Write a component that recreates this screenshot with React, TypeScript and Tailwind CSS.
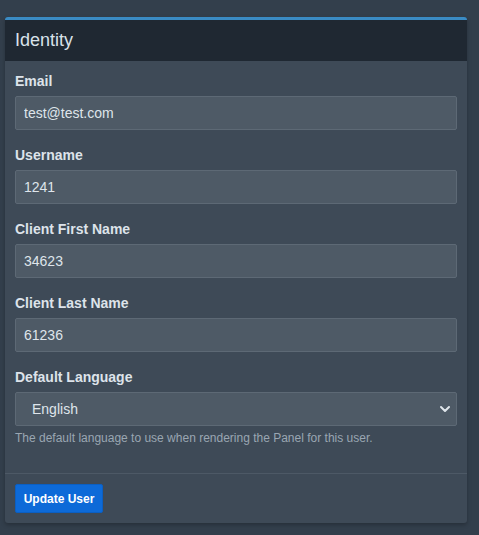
import { ChevronDown } from "lucide-react"

const fields = [
  { label: "Email", value: "test@test.com" },
  { label: "Username", value: "1241" },
  { label: "Client First Name", value: "34623" },
  { label: "Client Last Name", value: "61236" },
]

export default function App() {
  return (
    <div className="min-h-[535px] bg-[#333f4c] pt-[17px] pl-[5px] pr-[12px] font-['Liberation_Sans',Arial,sans-serif]">
      <div className="rounded-[3px] border-t-[3px] border-[#3a8bc4] bg-[#3e4a57] shadow-[0_2px_4px_rgba(0,0,0,0.25)]">
        <div className="flex h-[41px] items-center bg-[#1f2832] px-[10px]">
          <h3 className="text-[18px] text-[#d9e2ea]">Identity</h3>
        </div>

        <div className="px-[10px] pt-[10px] pb-[27px]">
          {fields.map((f) => (
            <div key={f.label} className="mb-[15px]">
              <label className="block h-[20px] text-[14px] leading-[20px] font-bold text-[#dde3ea]">{f.label}</label>
              <input
                readOnly
                value={f.value}
                className="mt-[5px] block h-[34px] w-full rounded-[2px] border border-[#5d6975] bg-[#4e5a66] px-[8px] text-[14px] text-[#dfe5eb] outline-none"
              />
            </div>
          ))}

          <label className="block h-[20px] text-[14px] leading-[20px] font-bold text-[#dde3ea]">Default Language</label>
          <div className="relative mt-[5px]">
            <select className="block h-[34px] w-full appearance-none rounded-[2px] border border-[#5d6975] bg-[#4e5a66] pl-[16px] text-[14px] text-[#dfe5eb] outline-none">
              <option>English</option>
            </select>
            <ChevronDown
              strokeWidth={3}
              className="pointer-events-none absolute top-[9px] right-[4px] h-[16px] w-[16px] text-[#dfe5eb]"
            />
          </div>
          <p className="mt-[4px] text-[12px] leading-[16px] text-[#9aa6b2]">
            The default language to use when rendering the Panel for this user.
          </p>
        </div>

        <div className="border-t border-[#4d5966] p-[10px]">
          <button className="h-[29px] w-[88px] rounded-[2px] border border-[#0b5fc2] bg-[#0d6ad8] text-[12px] font-bold text-white">
            Update User
          </button>
        </div>
      </div>
    </div>
  )
}
